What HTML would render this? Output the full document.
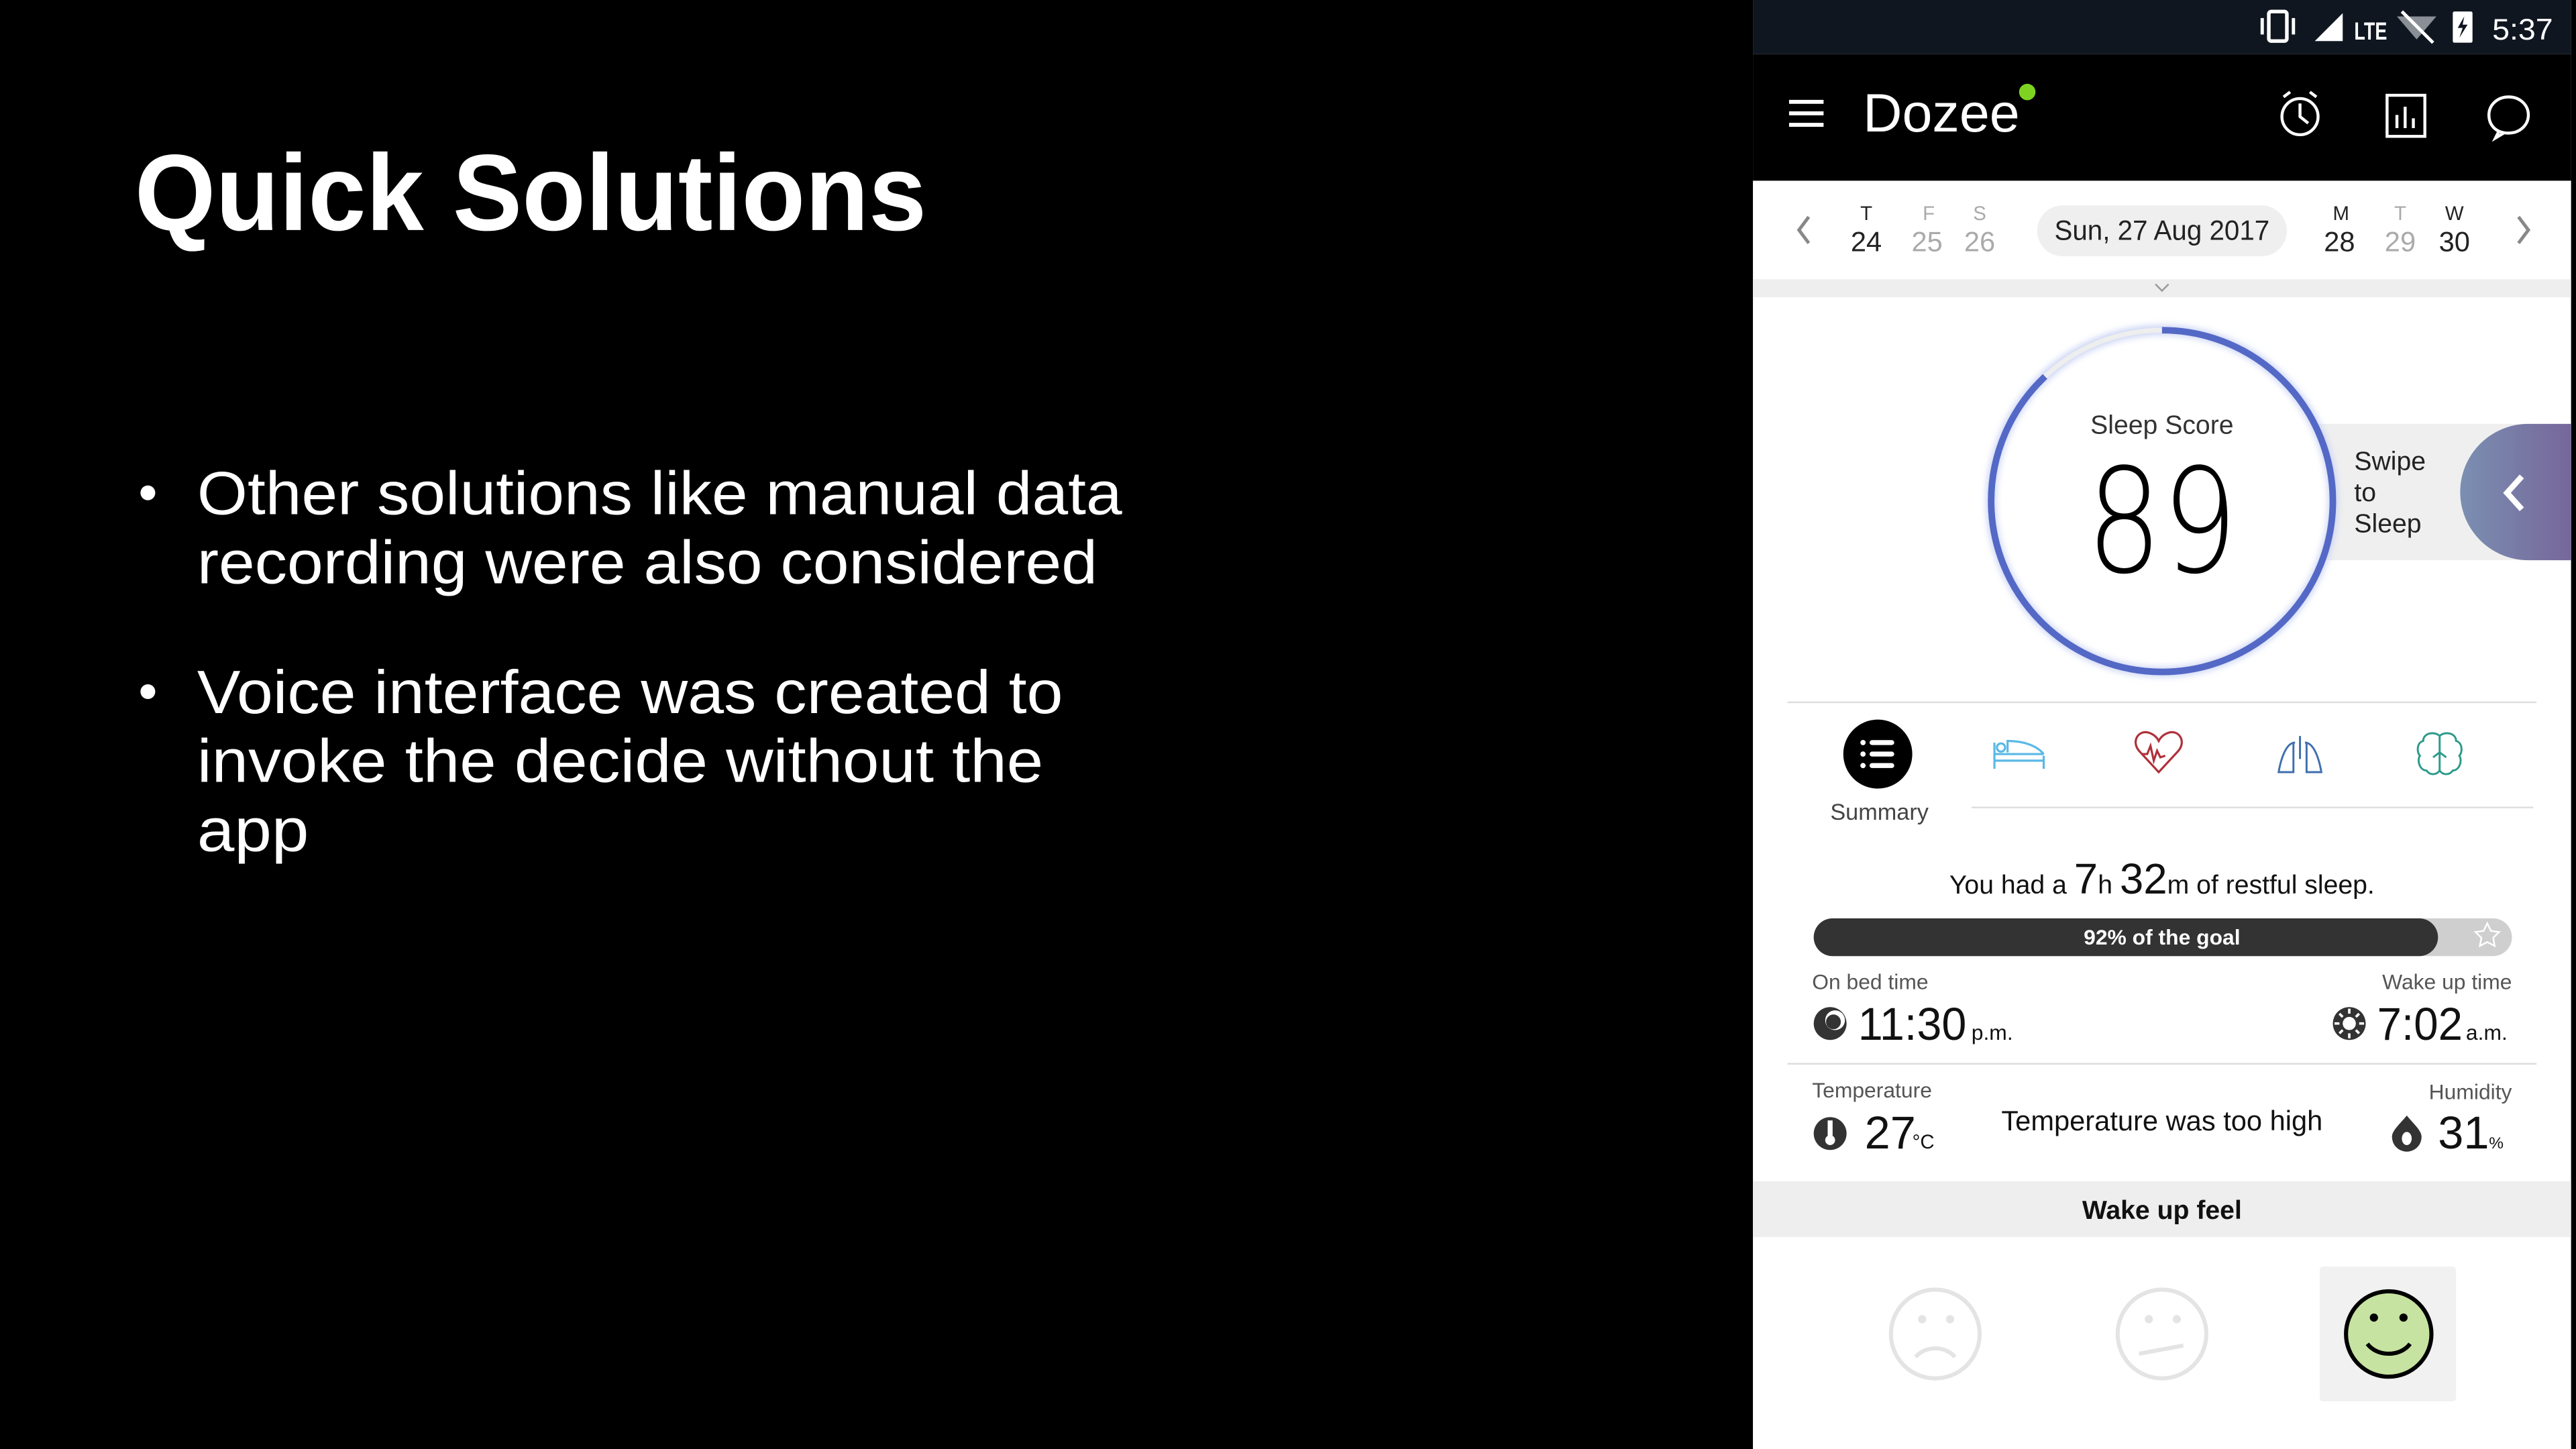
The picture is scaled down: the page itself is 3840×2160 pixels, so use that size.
<!DOCTYPE html>
<html><head><meta charset="utf-8"><style>
html,body{margin:0;padding:0;background:#000;width:3840px;height:2160px;overflow:hidden}
svg{display:block}
text{font-family:"Liberation Sans",sans-serif}
</style></head><body>
<svg width="3840" height="2160" viewBox="0 0 1568 882" xmlns="http://www.w3.org/2000/svg">
<rect width="1568" height="882" fill="#000"/>
<text x="82" y="140" fill="#fff" font-size="66" font-weight="bold" textLength="482" lengthAdjust="spacingAndGlyphs">Quick Solutions</text>
<g fill="#fff" font-size="37">
<circle cx="90" cy="300" r="4.5"/>
<text x="120" y="313" textLength="563" lengthAdjust="spacingAndGlyphs">Other solutions like manual data</text>
<text x="120" y="355" textLength="548" lengthAdjust="spacingAndGlyphs">recording were also considered</text>
<circle cx="90" cy="421" r="4.5"/>
<text x="120" y="434" textLength="527" lengthAdjust="spacingAndGlyphs">Voice interface was created to</text>
<text x="120" y="476" textLength="515" lengthAdjust="spacingAndGlyphs">invoke the decide without the</text>
<text x="120" y="518" textLength="68" lengthAdjust="spacingAndGlyphs">app</text>
</g>
<rect x="1067" y="0" width="498" height="882" fill="#fff"/>
<rect x="1067" y="0" width="498" height="33" fill="#0f1620"/>
<rect x="1067" y="33" width="498" height="77" fill="#000"/>
<g fill="#fff">
<rect x="1381" y="7" width="11" height="18" rx="1.5" fill="none" stroke="#fff" stroke-width="2.2"/>
<rect x="1376" y="11" width="2" height="10"/><rect x="1395" y="11" width="2" height="10"/>
<polygon points="1409,25 1426,8 1426,25"/>
<text x="1433" y="24" font-size="15" font-weight="bold" textLength="20" lengthAdjust="spacingAndGlyphs">LTE</text>
<polygon points="1459,10 1483,10 1471,24" fill="#8a8f96"/>
<line x1="1462" y1="7" x2="1481" y2="26" stroke="#fff" stroke-width="2"/>
<rect x="1493" y="7" width="12" height="19" rx="1"/>
<text x="1517" y="24" font-size="18" textLength="37" lengthAdjust="spacingAndGlyphs">5:37</text>
</g>
<polygon points="1500,10 1496,17 1499,17 1497,23 1502,15 1499,15" fill="#0f1620"/>
<g stroke="#fff" stroke-width="2.4"><line x1="1089" y1="62" x2="1110" y2="62"/><line x1="1089" y1="69" x2="1110" y2="69"/><line x1="1089" y1="76" x2="1110" y2="76"/></g>
<text x="1134" y="80" fill="#fff" font-size="33">Dozee</text>
<circle cx="1234" cy="56" r="5" fill="#7ed321"/>
<g fill="none" stroke="#fff" stroke-width="1.8">
<circle cx="1400" cy="71" r="11"/><path d="M1400 63v8l5 4M1390 59l4-3M1410 59l-4-3"/>
<rect x="1453" y="58" width="23" height="25"/><path d="M1459 78v-8M1464 78v-13M1469 78v-6"/>
<path d="M1527 81c-8 0-12-5-12-11s5-11 12-11 12 5 12 11-5 11-12 11zM1521 80l-2 4 5-3"/>
</g>
<g fill="none" stroke="#888" stroke-width="2"><path d="M1101 132l-6 8 6 8"/><path d="M1533 132l6 8-6 8"/></g>
<g font-size="12" text-anchor="middle">
<text x="1136" y="134" fill="#222">T</text><text x="1174" y="134" fill="#aaa">F</text><text x="1205" y="134" fill="#aaa">S</text>
<text x="1425" y="134" fill="#222">M</text><text x="1461" y="134" fill="#aaa">T</text><text x="1494" y="134" fill="#222">W</text>
</g>
<g font-size="17" text-anchor="middle">
<text x="1136" y="153" fill="#222">24</text><text x="1173" y="153" fill="#aaa">25</text><text x="1205" y="153" fill="#aaa">26</text>
<text x="1424" y="153" fill="#222">28</text><text x="1461" y="153" fill="#aaa">29</text><text x="1494" y="153" fill="#222">30</text>
</g>
<rect x="1240" y="125" width="152" height="31" rx="15.5" fill="#efefef"/>
<text x="1316" y="146" font-size="17" fill="#222" text-anchor="middle" textLength="131" lengthAdjust="spacingAndGlyphs">Sun, 27 Aug 2017</text>
<rect x="1067" y="170" width="498" height="11" fill="#eeeeee"/>
<path d="M1312 173l4 4 4-4" fill="none" stroke="#999" stroke-width="1"/>
<rect x="1410" y="258" width="155" height="83" fill="#efefef"/>
<defs><linearGradient id="pg" x1="0" x2="1"><stop offset="0" stop-color="#7b8fb2"/><stop offset="1" stop-color="#76679a"/></linearGradient>
<filter id="gl"><feGaussianBlur stdDeviation="2"/></filter></defs>
<path d="M1565 258h-26a41.5 41.5 0 0 0 0 83h26z" fill="url(#pg)"/>
<path d="M1535 290l-9 10 9 10" fill="none" stroke="#fff" stroke-width="3.5"/>
<g font-size="16" fill="#222"><text x="1433" y="286">Swipe</text><text x="1433" y="305">to</text><text x="1433" y="324">Sleep</text></g>
<circle cx="1316" cy="305" r="104" fill="#fff" stroke="#c9d3f4" stroke-width="6" filter="url(#gl)"/>
<circle cx="1316" cy="305" r="104" fill="none" stroke="#eeeeee" stroke-width="3"/>
<circle cx="1316" cy="305" r="104" fill="none" stroke="#5468c6" stroke-width="4" stroke-dasharray="575 700" transform="rotate(-90 1316 305)"/>
<text x="1316" y="264" font-size="16" fill="#333" text-anchor="middle">Sleep Score</text>
<text x="1316" y="348" font-size="88" fill="#000" text-anchor="middle" textLength="92" lengthAdjust="spacingAndGlyphs" style="font-family:'DejaVu Sans',sans-serif;font-weight:200">89</text>
<line x1="1088" y1="427.5" x2="1544" y2="427.5" stroke="#ddd"/>
<circle cx="1143" cy="459" r="21" fill="#000"/>
<g fill="#fff"><circle cx="1134" cy="452" r="1.6"/><circle cx="1134" cy="459" r="1.6"/><circle cx="1134" cy="466" r="1.6"/>
<rect x="1138" y="450.5" width="15" height="3" rx="1.5"/><rect x="1138" y="457.5" width="15" height="3" rx="1.5"/><rect x="1138" y="464.5" width="15" height="3" rx="1.5"/></g>
<text x="1144" y="499" font-size="14" fill="#444" text-anchor="middle">Summary</text>
<line x1="1200" y1="491.5" x2="1542" y2="491.5" stroke="#ddd"/>
<g fill="none" stroke="#5ab8e6" stroke-width="1.3"><path d="M1214 452v16M1244 460v8M1214 463h30M1214 459h30M1222 458v-7c10 0 18 3 22 8"/><circle cx="1218" cy="455" r="2.5"/></g>
<g fill="none" stroke="#b0303a" stroke-width="1.3"><path d="M1314 470l-12-13c-5-6 0-13 6-11 3 1 5 3 6 5 1-2 3-4 6-5 6-2 11 5 6 11z"/><path d="M1304 459h3l2-5 2 9 2-6 2 4 3-1"/></g>
<g fill="none" stroke="#3f6fae" stroke-width="1.2"><path d="M1400 448v14M1397 452c-6 0-9 12-10 18h9v-18M1403 452c6 0 9 12 10 18h-9v-18"/></g>
<g fill="none" stroke="#2c9a8a" stroke-width="1.2"><path d="M1485 448c-3-3-10-2-10 3-4 1-4 7-2 9-2 3 0 9 4 9 2 3 6 3 8 0 2 3 6 3 8 0 4 0 6-6 4-9 2-2 2-8-2-9 0-5-7-6-10-3zM1485 448v21M1481 461l4-3 4 3"/></g>
<text x="1316" y="544" text-anchor="middle" fill="#111" font-size="16">You had a <tspan font-size="26">7</tspan>h <tspan font-size="26">32</tspan>m of restful sleep.</text>
<rect x="1104" y="559" width="425" height="23" rx="11.5" fill="#cfcfcf"/>
<rect x="1104" y="559" width="380" height="23" rx="11.5" fill="#333"/>
<text x="1316" y="575" text-anchor="middle" fill="#fff" font-size="13" font-weight="bold">92% of the goal</text>
<path d="M1514 562l2.2 4.6 5 .7-3.6 3.5.9 5-4.5-2.4-4.5 2.4.9-5-3.6-3.5 5-.7z" fill="none" stroke="#fff" stroke-width="1"/>
<g font-size="13" fill="#555"><text x="1103" y="602">On bed time</text><text x="1529" y="602" text-anchor="end">Wake up time</text>
<text x="1103" y="668">Temperature</text><text x="1529" y="669" text-anchor="end">Humidity</text></g>
<circle cx="1114" cy="623" r="10" fill="#333"/><circle cx="1117" cy="621" r="6" fill="#fff"/><circle cx="1116" cy="622" r="4.5" fill="#333"/>
<text x="1131" y="633" font-size="28" fill="#111" textLength="66" lengthAdjust="spacingAndGlyphs">11:30</text>
<text x="1200" y="633" font-size="13" fill="#111">p.m.</text>
<circle cx="1430" cy="623" r="10" fill="#333"/><circle cx="1430" cy="623" r="4" fill="#fff"/>
<g stroke="#fff" stroke-width="1.5"><path d="M1430 614v3M1430 629v3M1421 623h3M1436 623h3M1424 617l2 2M1434 627l2 2M1436 617l-2 2M1424 629l2-2"/></g>
<text x="1447" y="633" font-size="28" fill="#111" textLength="52" lengthAdjust="spacingAndGlyphs">7:02</text>
<text x="1501" y="633" font-size="13" fill="#111">a.m.</text>
<line x1="1088" y1="647.5" x2="1544" y2="647.5" stroke="#ddd"/>
<circle cx="1114" cy="690" r="10" fill="#333"/><rect x="1112.5" y="682" width="3" height="10" fill="#fff"/><circle cx="1114" cy="694" r="3" fill="#fff"/>
<text x="1135" y="699" font-size="28" fill="#111">27</text><text x="1164" y="699" font-size="12" fill="#111">°C</text>
<text x="1316" y="688" font-size="17" text-anchor="middle" fill="#111">Temperature was too high</text>
<path d="M1465 679c-4 5-9 9-9 13a9 9 0 0 0 18 0c0-4-5-8-9-13z" fill="#333"/><ellipse cx="1465" cy="693" rx="3" ry="4" fill="#fff"/>
<text x="1484" y="699" font-size="28" fill="#111">31</text><text x="1515" y="699" font-size="10" fill="#111">%</text>
<rect x="1067" y="719" width="498" height="34" fill="#eeeeee"/>
<text x="1316" y="742" font-size="16" font-weight="bold" text-anchor="middle" fill="#111">Wake up feel</text>
<g fill="none" stroke="#e4e4e4" stroke-width="2.5">
<circle cx="1178" cy="812" r="27"/><path d="M1166 826c6-7 18-7 24 0"/>
<circle cx="1316" cy="812" r="27"/><path d="M1302 824l27-5"/>
</g>
<g fill="#e4e4e4"><circle cx="1170" cy="803" r="2.5"/><circle cx="1187" cy="803" r="2.5"/><circle cx="1308" cy="803" r="2.5"/><circle cx="1325" cy="803" r="2.5"/></g>
<rect x="1412" y="771" width="83" height="82" rx="2" fill="#f1f1f1"/>
<circle cx="1454" cy="812" r="26" fill="#c7e3a1" stroke="#000" stroke-width="2.5"/>
<circle cx="1445" cy="802" r="2.5"/><circle cx="1463" cy="802" r="2.5"/>
<path d="M1441 818c6 8 20 8 26 0" fill="none" stroke="#000" stroke-width="2.5"/>
</svg>
</body></html>
